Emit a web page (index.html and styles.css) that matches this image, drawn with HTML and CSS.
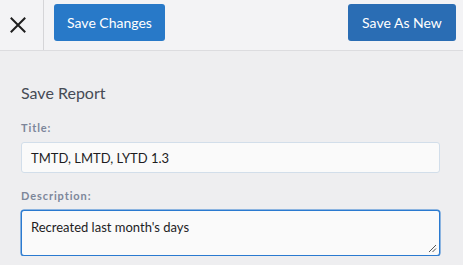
FILE: index.html
```html
<!DOCTYPE html>
<html>
<head>
<meta charset="utf-8">
<link rel="stylesheet" href="styles.css">
</head>
<body>
<div class="toolbar">
  <div class="close-cell">
    <svg class="close-icon" width="16" height="16" viewBox="0 0 16 16"><path d="M1.5 1.5 L14.5 14.5 M14.5 1.5 L1.5 14.5" stroke="#1e1e1e" stroke-width="2" stroke-linecap="square" fill="none"/></svg>
  </div>
  <div class="actions">
    <button class="btn btn-primary">Save Changes</button>
    <button class="btn btn-secondary">Save As New</button>
  </div>
</div>
<div class="content">
  <h2 class="heading">Save Report</h2>
  <label class="field-label">Title:</label>
  <div class="input">TMTD, LMTD, LYTD 1.3</div>
  <label class="field-label desc-label">Description:</label>
  <div class="textarea">Recreated last month's days
    <svg class="grip" width="9" height="9" viewBox="0 0 9 9"><path d="M1 8 L8 1 M4.5 8 L8 4.5" stroke="#555" stroke-width="1" fill="none"/></svg>
  </div>
</div>
</body>
</html>
```
FILE: styles.css
```css
html, body {
  margin: 0;
  padding: 0;
  background: #eeeef0;
  font-family: Lato, "Open Sans", sans-serif;
}
.toolbar {
  display: flex;
  height: 50px;
  background: #f3f3f5;
  border-bottom: 1px solid #dcdcdf;
}
.close-cell {
  width: 44px;
  border-right: 1px solid #d5d5d8;
  display: flex;
  align-items: center;
  padding-left: 10px;
  box-sizing: border-box;
}
.close-icon {
  display: block;
}
.actions {
  flex: 1;
  display: flex;
  justify-content: space-between;
  align-items: flex-start;
  padding: 4px 7px 0 10px;
}
.btn {
  height: 37px;
  border: none;
  border-radius: 3px;
  color: #fff;
  font-family: Lato, sans-serif;
  font-size: 14px;
  padding: 0;
  white-space: nowrap;
}
.btn-primary {
  background: #2879c8;
  width: 111px;
}
.btn-secondary {
  background: #2a6db4;
  width: 108px;
}
.content {
  padding: 32px 23px 0 21px;
}
.heading {
  margin: 0;
  font-size: 16px;
  line-height: 20px;
  font-weight: 400;
  color: #464b55;
}
.field-label {
  display: block;
  margin-top: 17px;
  font-size: 11px;
  line-height: 15px;
  font-weight: 700;
  letter-spacing: 0.9px;
  color: #7c869a;
}
.desc-label {
  margin-top: 15px;
}
.input {
  margin-top: 7px;
  height: 31px;
  box-sizing: border-box;
  border: 1px solid #d2deea;
  border-radius: 3px;
  background: #fafafa;
  padding: 0 9px;
  display: flex;
  align-items: center;
  font-size: 13px;
  color: #1d1d1f;
}
.textarea {
  position: relative;
  margin-top: 7px;
  height: 46px;
  box-sizing: border-box;
  border: 1px solid #2a7ad0;
  box-shadow: 0 0 0 0.5px #2a7ad0;
  border-radius: 3px;
  background: #fafafa;
  padding: 8px 9px;
  font-size: 13px;
  line-height: 16px;
  color: #1d1d1f;
}
.grip {
  position: absolute;
  right: 2px;
  bottom: 2px;
}
```
